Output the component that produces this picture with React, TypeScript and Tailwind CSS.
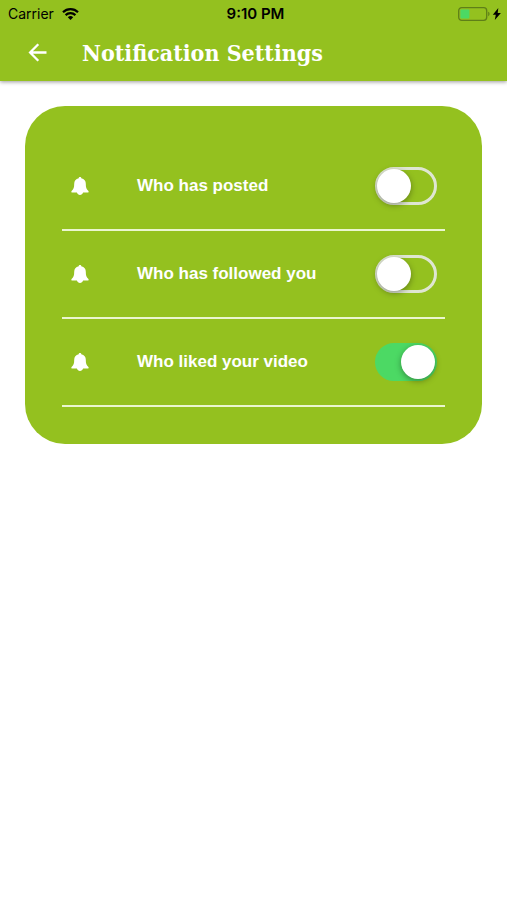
import { useState } from "react";

type Setting = {
  id: string;
  label: string;
  enabled: boolean;
};

const initialSettings: Setting[] = [
  { id: "posted", label: "Who has posted", enabled: false },
  { id: "followed", label: "Who has followed you", enabled: false },
  { id: "liked", label: "Who liked your video", enabled: true },
];

export default function App() {
  const [settings, setSettings] = useState(initialSettings);

  function handleToggle(id: string) {
    setSettings(
      settings.map((setting) =>
        setting.id === id ? { ...setting, enabled: !setting.enabled } : setting,
      ),
    );
  }

  return (
    <div className="min-h-screen bg-white font-['Liberation_Sans',Arial,sans-serif]">
      <header className="bg-[#94c11f] shadow-[0_1px_4px_rgba(0,0,0,0.4)]">
        <StatusBar />
        <div className="flex h-[53px] items-center pb-1 pl-[26px]">
          <button type="button" aria-label="Back" className="text-white">
            <BackIcon />
          </button>
          <h1 className="pl-8 font-['Roboto_Slab','DejaVu_Serif_Condensed','DejaVu_Serif',serif] text-[23px] leading-8 font-bold whitespace-nowrap text-white">
            Notification Settings
          </h1>
        </div>
      </header>

      <main className="px-[25px] pt-[25px]">
        <ul className="rounded-[40px] bg-[#94c11f] px-[37px] py-[37px]">
          {settings.map((setting) => (
            <SettingRow
              key={setting.id}
              setting={setting}
              onToggle={handleToggle}
            />
          ))}
        </ul>
      </main>
    </div>
  );
}

function StatusBar() {
  return (
    <div className="grid h-7 grid-cols-3 items-center pr-1 pl-2 font-[Inter,Roboto,sans-serif] text-sm text-black">
      <div className="flex items-center gap-2">
        <span>Carrier</span>
        <WifiIcon />
      </div>
      <span className="text-center text-[15px] font-semibold">9:10 PM</span>
      <div className="flex items-center justify-end gap-[2px]">
        <BatteryIcon />
        <BoltIcon />
      </div>
    </div>
  );
}

function SettingRow({
  setting,
  onToggle,
}: {
  setting: Setting;
  onToggle: (id: string) => void;
}) {
  return (
    <li className="flex h-22 items-center border-b-2 border-[#eaf6cf] pr-2 pl-[9px] text-white">
      <BellIcon />
      <label
        htmlFor={setting.id}
        className="flex-1 pl-12 text-[17px] leading-6 font-bold"
      >
        {setting.label}
      </label>
      <input
        id={setting.id}
        type="checkbox"
        role="switch"
        checked={setting.enabled}
        onChange={() => onToggle(setting.id)}
        className="flex h-[38px] w-[62px] shrink-0 appearance-none items-center rounded-full border-[3px] border-[#dfe6d2] before:-mx-px before:size-[34px] before:shrink-0 before:rounded-full before:bg-white before:shadow-[0_2px_6px_rgba(0,0,0,0.35)] before:content-[''] checked:justify-end checked:border-[#4cd964] checked:bg-[#4cd964]"
      />
    </li>
  );
}

function BackIcon() {
  return (
    <svg width="24" height="24" viewBox="0 0 24 24" fill="none" aria-hidden="true">
      <path
        d="M20.5 11.500H4.500M12.300 3.300 4.100 11.500l8.200 8.200"
        stroke="currentColor"
        strokeWidth="2.3"
      />
    </svg>
  );
}

function BellIcon() {
  return (
    <svg
      width="18"
      height="18"
      viewBox="0 0 18 18"
      fill="currentColor"
      className="shrink-0"
      aria-hidden="true"
    >
      <path d="M9 0c.8 0 1.3.5 1.3 1.2 3 .5 4.5 2.700 4.500 5.600 0 3.800.6 5.300 2.400 7 .8.8.5 1.800-.5 1.800h-4.600C11.600 17.200 10.400 18 9 18s-2.600-.8-3.100-2.400H1.300c-1 0-1.300-1-.5-1.800 1.800-1.700 2.400-3.200 2.400-7 0-2.900 1.500-5.100 4.500-5.600C7.700.5 8.200 0 9 0Z" />
    </svg>
  );
}

function WifiIcon() {
  return (
    <svg width="17" height="13" viewBox="0 0 17 13" fill="none" aria-hidden="true">
      <path
        d="M1 4.3a10.600 10.600 0 0 1 15 0M3.600 7.100a7 7 0 0 1 9.800 0"
        stroke="currentColor"
        strokeWidth="2.2"
      />
      <path d="M5.8 9.200a4 4 0 0 1 5.400 0L8.500 12Z" fill="currentColor" />
    </svg>
  );
}

function BatteryIcon() {
  return (
    <svg width="32" height="14" viewBox="0 0 32 14" fill="none" aria-hidden="true">
      <rect x="0.7" y="0.7" width="28" height="12.6" rx="3" stroke="#5f7f18" strokeWidth="1.3" />
      <rect x="2.4" y="2.4" width="9" height="9.2" rx="1" fill="#4cd964" />
      <path d="M30.2 4.8c1.8.6 1.8 3.8 0 4.4Z" fill="#5f7f18" />
    </svg>
  );
}

function BoltIcon() {
  return (
    <svg width="11" height="12" viewBox="0 0 11 12" aria-hidden="true">
      <path d="M6.300 0 .8 6.800h3L2.800 12 8.900 5H5.700Z" fill="currentColor" />
    </svg>
  );
}
